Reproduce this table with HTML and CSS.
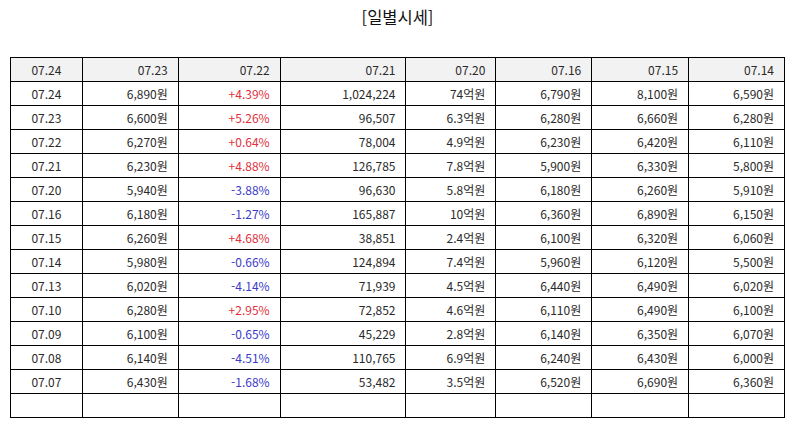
FILE: index.html
```html
<!DOCTYPE html>
<html lang="ko">
<head>
<meta charset="utf-8">
<title>일별시세</title>
<link rel="stylesheet" href="styles.css">
</head>
<body>
<div class="title">[일별시세]</div>
<div class="wrap">
<table class="price">
<colgroup>
<col class="c1"><col class="c2"><col class="c3"><col class="c4"><col class="c5"><col class="c6"><col class="c7"><col class="c8">
</colgroup>
<thead>
<tr><th class="center">07.24</th><th>07.23</th><th>07.22</th><th>07.21</th><th>07.20</th><th>07.16</th><th>07.15</th><th>07.14</th></tr>
</thead>
<tbody>
<tr><td class="center">07.24</td><td>6,890원</td><td class="up">+4.39%</td><td>1,024,224</td><td>74억원</td><td>6,790원</td><td>8,100원</td><td>6,590원</td></tr>
<tr><td class="center">07.23</td><td>6,600원</td><td class="up">+5.26%</td><td>96,507</td><td>6.3억원</td><td>6,280원</td><td>6,660원</td><td>6,280원</td></tr>
<tr><td class="center">07.22</td><td>6,270원</td><td class="up">+0.64%</td><td>78,004</td><td>4.9억원</td><td>6,230원</td><td>6,420원</td><td>6,110원</td></tr>
<tr><td class="center">07.21</td><td>6,230원</td><td class="up">+4.88%</td><td>126,785</td><td>7.8억원</td><td>5,900원</td><td>6,330원</td><td>5,800원</td></tr>
<tr><td class="center">07.20</td><td>5,940원</td><td class="down">-3.88%</td><td>96,630</td><td>5.8억원</td><td>6,180원</td><td>6,260원</td><td>5,910원</td></tr>
<tr><td class="center">07.16</td><td>6,180원</td><td class="down">-1.27%</td><td>165,887</td><td>10억원</td><td>6,360원</td><td>6,890원</td><td>6,150원</td></tr>
<tr><td class="center">07.15</td><td>6,260원</td><td class="up">+4.68%</td><td>38,851</td><td>2.4억원</td><td>6,100원</td><td>6,320원</td><td>6,060원</td></tr>
<tr><td class="center">07.14</td><td>5,980원</td><td class="down">-0.66%</td><td>124,894</td><td>7.4억원</td><td>5,960원</td><td>6,120원</td><td>5,500원</td></tr>
<tr><td class="center">07.13</td><td>6,020원</td><td class="down">-4.14%</td><td>71,939</td><td>4.5억원</td><td>6,440원</td><td>6,490원</td><td>6,020원</td></tr>
<tr><td class="center">07.10</td><td>6,280원</td><td class="up">+2.95%</td><td>72,852</td><td>4.6억원</td><td>6,110원</td><td>6,490원</td><td>6,100원</td></tr>
<tr><td class="center">07.09</td><td>6,100원</td><td class="down">-0.65%</td><td>45,229</td><td>2.8억원</td><td>6,140원</td><td>6,350원</td><td>6,070원</td></tr>
<tr><td class="center">07.08</td><td>6,140원</td><td class="down">-4.51%</td><td>110,765</td><td>6.9억원</td><td>6,240원</td><td>6,430원</td><td>6,000원</td></tr>
<tr><td class="center">07.07</td><td>6,430원</td><td class="down">-1.68%</td><td>53,482</td><td>3.5억원</td><td>6,520원</td><td>6,690원</td><td>6,360원</td></tr>
<tr><td class="center"></td><td></td><td></td><td></td><td></td><td></td><td></td><td></td></tr>
</tbody>
</table>
</div>
</body>
</html>
```

FILE: styles.css
```css
html, body {
  margin: 0;
  padding: 0;
  background: #fff;
  overflow: hidden;
}
body {
  padding: 0 10px;
  font-family: "Noto Sans CJK KR", "Noto Sans", "DejaVu Sans", sans-serif;
  color: #2a2a2a;
}
.title {
  text-align: center;
  font-size: 16.5px;
  line-height: 20px;
  padding-top: 7px;
  margin-bottom: 30px;
  color: #111;
}
.wrap {
  width: 775px;
}
.price {
  border-collapse: collapse;
  table-layout: fixed;
  width: 100%;
  font-size: 12px;
}
.c1 { width: 9.29%; }
.c2 { width: 12.39%; }
.c3 { width: 13.16%; }
.c4 { width: 16.26%; }
.c5 { width: 11.61%; }
.c6 { width: 12.39%; }
.c7 { width: 12.52%; }
.c8 { width: 12.38%; }
.price th,
.price td {
  border: 1px solid #000;
  padding: 0 10px;
  height: 23px;
  line-height: 23px;
  text-align: right;
  font-weight: normal;
  white-space: nowrap;
  overflow: hidden;
}
.price th {
  background: #f2f2f2;
}
.price .center {
  text-align: center;
}
.up { color: #e0313c; }
.down { color: #3b3bc8; }
```
